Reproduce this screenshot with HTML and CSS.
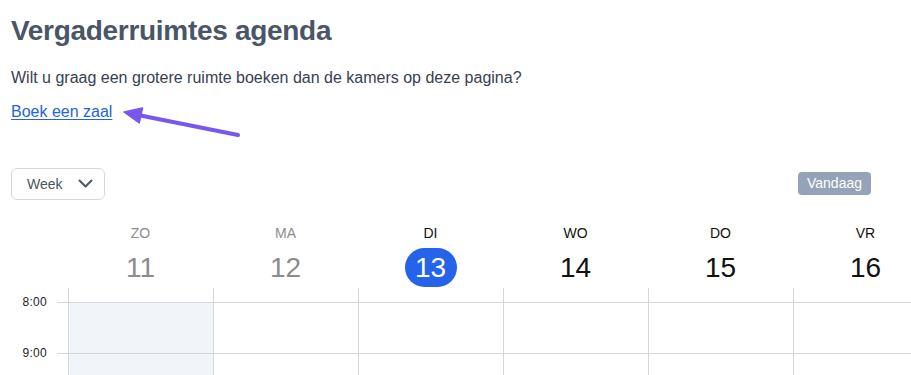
FILE: index.html
```html
<!DOCTYPE html>
<html lang="nl">
<head>
<meta charset="utf-8">
<title>Vergaderruimtes agenda</title>
<link rel="stylesheet" href="styles.css">
</head>
<body>
<div class="page">
  <h1 class="title">Vergaderruimtes agenda</h1>
  <p class="intro">Wilt u graag een grotere ruimte boeken dan de kamers op deze pagina?</p>
  <p class="book"><a class="book-link" href="#">Boek een zaal</a></p>
  <svg class="annot-arrow" width="260" height="150" viewBox="0 0 260 150" aria-hidden="true">
    <line x1="238" y1="135" x2="138" y2="115" stroke="#7757ee" stroke-width="4" stroke-linecap="round"/>
    <polygon points="124,112 142.5,108 139.3,122.8" fill="#7757ee" stroke="#7757ee" stroke-width="1.5" stroke-linejoin="round"/>
  </svg>
  <div class="toolbar">
    <button class="view-select" type="button">
      <span>Week</span>
      <svg class="chev" width="15" height="9" viewBox="0 0 15 9"><path d="M1.5 1.5 L7.5 7.5 L13.5 1.5" fill="none" stroke="#4b5563" stroke-width="2" stroke-linecap="round" stroke-linejoin="round"/></svg>
    </button>
    <button class="today-btn" type="button">Vandaag</button>
  </div>
</div>

<div class="calendar">
  <div class="cal-head">
    <div class="gutter-head"></div>
    <div class="day-head past"><div class="dname">ZO</div><div class="dnum">11</div></div>
    <div class="day-head past"><div class="dname">MA</div><div class="dnum">12</div></div>
    <div class="day-head today"><div class="dname">DI</div><div class="dnum"><span class="pill">13</span></div></div>
    <div class="day-head"><div class="dname">WO</div><div class="dnum">14</div></div>
    <div class="day-head"><div class="dname">DO</div><div class="dnum">15</div></div>
    <div class="day-head"><div class="dname">VR</div><div class="dnum">16</div></div>
  </div>
  <div class="cal-body">
    <div class="gutter">
      <div class="spacer"></div>
      <div class="hour-slot"><div class="hour-mark"><span class="hlabel">8:00</span><span class="tick"></span></div></div>
      <div class="hour-slot"><div class="hour-mark"><span class="hlabel">9:00</span><span class="tick"></span></div></div>
    </div>
    <div class="day-col shaded"><div class="spacer"></div><div class="cell"></div><div class="cell"></div></div>
    <div class="day-col"><div class="spacer"></div><div class="cell"></div><div class="cell"></div></div>
    <div class="day-col"><div class="spacer"></div><div class="cell"></div><div class="cell"></div></div>
    <div class="day-col"><div class="spacer"></div><div class="cell"></div><div class="cell"></div></div>
    <div class="day-col"><div class="spacer"></div><div class="cell"></div><div class="cell"></div></div>
    <div class="day-col"><div class="spacer"></div><div class="cell"></div><div class="cell"></div></div>
  </div>
</div>
</body>
</html>
```

FILE: styles.css
```css
* { box-sizing: border-box; }

html, body {
  margin: 0;
  padding: 0;
  background: #ffffff;
  overflow: hidden;
  font-family: "Liberation Sans", Arial, sans-serif;
}

.page {
  position: relative;
  padding: 14px 40px 0 11px;
}

.title {
  margin: 0;
  font-size: 28px;
  line-height: 33.6px;
  font-weight: 700;
  letter-spacing: -0.3px;
  color: #4a5568;
}

.intro {
  margin: 18px 0 0;
  font-size: 16px;
  line-height: 24px;
  color: #374151;
}

.book {
  margin: 10px 0 0;
  font-size: 16px;
  line-height: 24px;
}

.book-link {
  color: #2563d8;
  text-decoration: underline;
  text-underline-offset: 2px;
}

.annot-arrow {
  position: absolute;
  left: 0;
  top: 0;
  pointer-events: none;
}

.toolbar {
  margin-top: 44px;
  display: flex;
  justify-content: space-between;
  align-items: center;
}

.view-select {
  display: flex;
  align-items: center;
  gap: 15px;
  width: 94px;
  height: 32px;
  padding: 0 0 0 15px;
  background: #ffffff;
  border: 1px solid #d4d8de;
  border-radius: 6px;
  font-family: inherit;
  font-size: 14px;
  color: #4b5563;
}

.chev { display: block; }

.today-btn {
  height: 23px;
  padding: 0 9px;
  background: #94a3b8;
  color: #ffffff;
  border: none;
  border-radius: 4px;
  font-family: inherit;
  font-size: 14px;
  line-height: 23px;
}

.calendar {
  width: 100%;
  overflow: hidden;
}

.cal-head,
.cal-body {
  display: grid;
  grid-template-columns: 68px repeat(6, 145px);
}

.cal-head {
  padding-top: 25px;
  padding-bottom: 1px;
}

.day-head {
  text-align: center;
  color: #111111;
}

.dname {
  font-size: 14px;
  line-height: 16px;
}

.dnum {
  margin-top: 7px;
  font-size: 28px;
  line-height: 39px;
}

.day-head.past { color: #8c8c8c; }

.pill {
  display: inline-block;
  width: 52px;
  height: 39px;
  border-radius: 20px;
  background: #2563eb;
  color: #ffffff;
}

.spacer { height: 14px; }

.day-col {
  border-left: 1px solid #d4d8de;
}

.cell {
  height: 51px;
  border-top: 1px solid #d4d8de;
}

.day-col.shaded .cell { background: #f1f4f8; }

.hour-slot { height: 51px; }

.hour-mark {
  height: 1px;
  display: flex;
  align-items: center;
  justify-content: flex-end;
  gap: 10px;
}

.hlabel {
  font-size: 12px;
  line-height: 14px;
  color: #1f2328;
  letter-spacing: 0.3px;
}

.tick {
  width: 11px;
  height: 1px;
  background: #d4d8de;
}
```
